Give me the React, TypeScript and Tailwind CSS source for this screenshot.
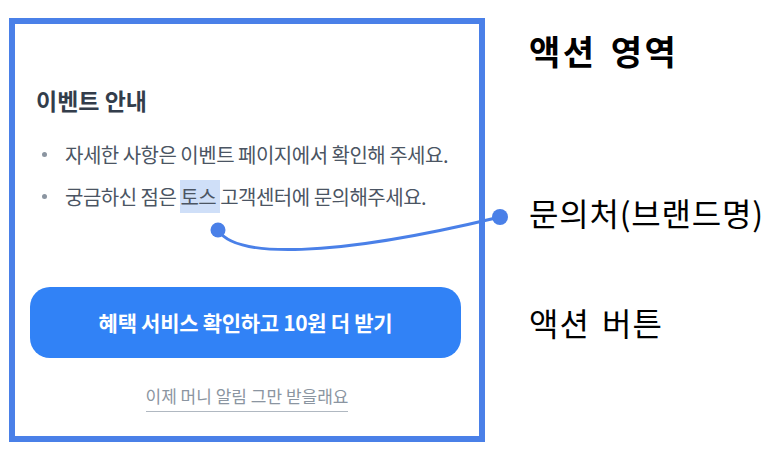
import React from "react";

const font = { fontFamily: '"Noto Sans CJK KR", "Noto Sans", sans-serif' };

export default function App() {
  return (
    <div className="relative w-[775px] h-[471px] bg-white overflow-hidden" style={font}>
      <div className="flex">
        <div className="ml-[9px] mt-[18px] w-[476px] h-[424px] border-[6px] border-[#4a80e8] flex flex-col">
          <div className="pl-[21px] pt-[61px] text-[23px] leading-[31px] font-bold text-[#333d4b] tracking-[0px]">
            이벤트 안내
          </div>
          <ul className="mt-[23px] pl-[27px] flex flex-col gap-[11px] text-[20px] leading-[31px] text-[#4b5563] tracking-[-0.5px]">
            <li className="flex items-center">
              <span className="w-[5px] h-[5px] rounded-full bg-[#8b95a1] mr-[18px]" />
              <span>자세한 사항은 이벤트 페이지에서 확인해 주세요.</span>
            </li>
            <li className="flex items-center">
              <span className="w-[5px] h-[5px] rounded-full bg-[#8b95a1] mr-[18px]" />
              <span>
                궁금하신 점은 <span className="bg-[#cfdff8] py-[2px]">토스 </span>고객센터에 문의해주세요.
              </span>
            </li>
          </ul>
          <div className="mt-[75px] ml-[15px] w-[431px] h-[71px] rounded-[20px] bg-[#3182f6] flex items-center justify-center text-white text-[21px] font-bold tracking-[-0.3px]">
            혜택 서비스 확인하고 10원 더 받기
          </div>
          <div className="mt-[26px] flex justify-center">
            <span className="text-[17px] leading-[24px] text-[#8b95a1] border-b border-[#b0b8c1] pb-[3px]">
              이제 머니 알림 그만 받을래요
            </span>
          </div>
        </div>
        <div className="ml-[44px] flex flex-col text-black">
          <div className="mt-[31px] text-[34px] leading-[40px] font-bold tracking-[2.5px] [word-spacing:4px]">액션 영역</div>
          <div className="mt-[121px] text-[32px] leading-[40px] tracking-[0.8px]">문의처(브랜드명)</div>
          <div className="mt-[70px] text-[32px] leading-[40px] tracking-[1px] [word-spacing:4px]">액션 버튼</div>
        </div>
      </div>
      <svg className="absolute left-0 top-0 pointer-events-none" width="775" height="471">
        <path d="M218 230 C235 258 330 258 500 217" fill="none" stroke="#4a80e8" strokeWidth="3" />
        <circle cx="218" cy="230" r="7.5" fill="#4a80e8" />
        <circle cx="500" cy="217" r="8" fill="#4a80e8" />
      </svg>
    </div>
  );
}
